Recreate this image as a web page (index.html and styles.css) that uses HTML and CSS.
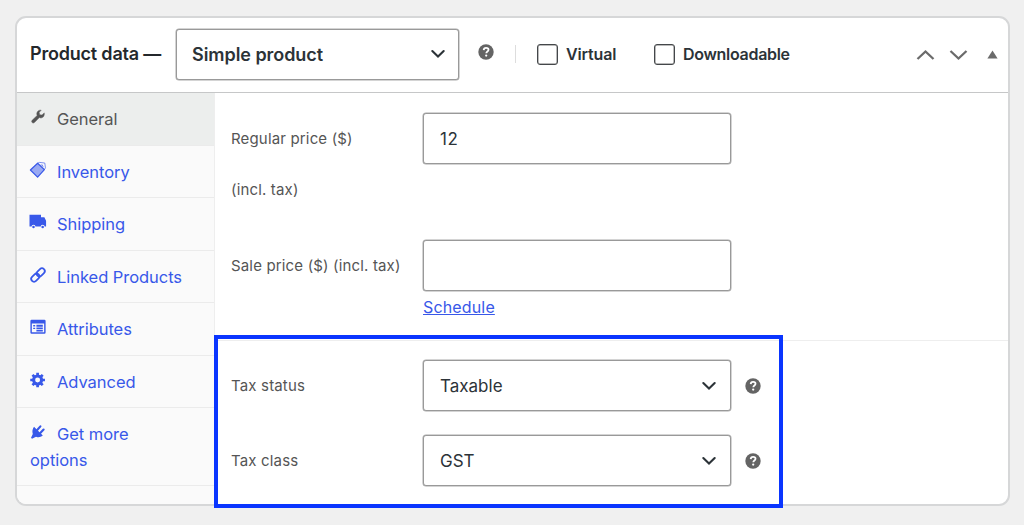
FILE: index.html
```html
<!DOCTYPE html>
<html lang="en">
<head>
<meta charset="utf-8">
<title>Product data</title>
<link rel="stylesheet" href="styles.css">
</head>
<body>
<svg class="defs" width="0" height="0">
  <symbol id="help" viewBox="0 0 16 16"><circle cx="8" cy="8" r="7.7" fill="#646464"/><path d="M5.7 6.1C5.8 4.5 6.8 3.9 8.1 3.9c1.5 0 2.4.8 2.4 1.9 0 1.8-2.2 1.6-2.2 3.4" fill="none" stroke="#fff" stroke-width="1.8"/><circle cx="8.2" cy="11.6" r="1.15" fill="#fff"/></symbol>
  <symbol id="down" viewBox="0 0 16 10"><path d="M2.300 2l5.700 5.600L13.700 2" fill="none" stroke="currentColor" stroke-width="2.1" stroke-linecap="round"/></symbol>
</svg>
<main class="panel">
  <header class="head">
    <h2 class="title">Product data —</h2>
    <div class="field select type">Simple product<svg class="chev"><use href="#down"/></svg></div>
    <svg class="help head-help"><use href="#help"/></svg>
    <span class="sep"></span>
    <label class="check virtual"><span class="box"></span>Virtual</label>
    <label class="check"><span class="box"></span><span class="dl">Downloadable</span></label>
    <div class="handles">
      <svg width="19" height="12" viewBox="0 0 19 12"><path d="M1.5 10l8-7.5 8 7.5" fill="none" stroke="#6b6b6b" stroke-width="2.3"/></svg>
      <svg width="19" height="12" viewBox="0 0 19 12"><path d="M1.5 2l8 7.5 8-7.5" fill="none" stroke="#6b6b6b" stroke-width="2.3"/></svg>
      <svg width="11" height="12" viewBox="0 0 11 12"><path d="M.4 9.5L5.5 1.5l5.1 8z" fill="#6b6b6b"/></svg>
    </div>
  </header>
  <div class="body">
    <nav class="tabs">
      <a class="tab active"><svg class="icon" viewBox="0 0 20 20"><path d="M16.700 9.800c-1.300 1.400-3.400 1.700-5 .9l-6.200 6.200c-.8.8-2 .8-2.800 0s-.8-2 0-2.800L9 8c-.9-1.700-.6-3.800.8-5.200C10.900 1.700 12.500 1.200 14 1.600L11.500 4.100l.5 3 3 .5 2.800-2.700c.3 1.700-.1 3.600-1.100 4.900z" stroke="currentColor" stroke-width=".6"/></svg>General</a>
      <a class="tab"><svg class="icon" viewBox="0 0 20 20"><path d="M.5 10L9.500 1.500l8.500 8-8.500 9.500z" fill-opacity=".5" stroke="currentColor" stroke-width="1.500" stroke-linejoin="round"/><path d="M9.500 1.500L12 .5l6.500.8.8 6-1.300 2.200M13 4q3-2 3.500 2.500" fill="none" stroke="currentColor" stroke-width="1.100" stroke-opacity=".75"/></svg>Inventory</a>
      <a class="tab"><svg class="icon truck" viewBox="0 0 20 20"><path d="M0 2h13.500v3h4l2 4v7h-1.700a2.300 2.300 0 0 0-4.600 0H7a2.300 2.300 0 0 0-4.600 0H0z"/><circle cx="4.700" cy="16.500" r="1.500"/><circle cx="15.500" cy="16.500" r="1.500"/></svg>Shipping</a>
      <a class="tab"><svg class="icon" viewBox="0 0 20 20"><g fill="none" stroke="currentColor" stroke-width="2.200" transform="rotate(-45 10 10)"><rect x="-.5" y="6.500" width="11.500" height="7" rx="3.500"/><rect x="9" y="6.500" width="11.500" height="7" rx="3.500"/></g></svg>Linked Products</a>
      <a class="tab"><svg class="icon" viewBox="0 0 20 20"><path fill-rule="evenodd" d="M2 1h16q1.500 0 1.500 1.500v14.500q0 1.500-1.500 1.500H2q-1.500 0-1.500-1.500V2.500Q.5 1 2 1zM2.300 5.500v11h15.400v-11z"/><path d="M4 7.500h2.500v2H4zM8 7.200h8v2.500H8zM4 10.800h2.500v1.800H4zM8 10.500h8v2.300H8zM8 13.600h8v2H8z"/></svg>Attributes</a>
      <a class="tab"><svg class="icon" viewBox="0 0 20 20"><circle cx="9.500" cy="10" r="5" fill="none" stroke="currentColor" stroke-width="3.800"/><path d="M9.500 .8v4M9.500 15.200v4M.3 10h4M14.700 10h4M3.100 3.600l3 3M12.900 13.400l3 3M3.100 16.400l3-3M12.900 6.600l3-3" stroke="currentColor" stroke-width="3.400"/></svg>Advanced</a>
      <a class="tab last"><svg class="icon" viewBox="0 0 20 20"><path d="M5 3.500L16 14.500c-2.800 2-5.500 2.500-8.500 1.300L2.500 18.500 1.300 17.300 3.500 12.500C2.500 9.500 3 6.200 5 3.500z"/><path d="M9 7.500l4-4.500M12.800 11.300L17 7" stroke="currentColor" stroke-width="2.700" stroke-linecap="round"/></svg>Get more<br><span class="opt">options</span></a>
    </nav>
    <section class="content">
      <div class="group prices">
        <div class="row"><span class="label two"><span>Regular price ($)</span><span class="incl">(incl. tax)</span></span><div class="field num">12</div></div>
        <div class="row"><span class="label sale">Sale price ($) (incl. tax)</span><div><div class="field"></div><a class="schedule">Schedule</a></div></div>
      </div>
      <div class="group taxes">
        <div class="row"><span class="label status">Tax status</span><div class="field select"><span class="taxable">Taxable</span><svg class="chev"><use href="#down"/></svg></div><svg class="help"><use href="#help"/></svg></div>
        <div class="row"><span class="label class">Tax class</span><div class="field select"><span class="gst">GST</span><svg class="chev"><use href="#down"/></svg></div><svg class="help"><use href="#help"/></svg></div>
      </div>
    </section>
  </div>
</main>
<div class="highlight"></div>
</body>
</html>
```
FILE: styles.css
```css
* { box-sizing: border-box; }
body { margin: 0; height: 525px; padding: 16px 14px 19px 15px; overflow: hidden; background: #f0f0f0; color: #2c3338; font-family: Inter, "Liberation Sans", sans-serif; font-size: 17px; }
.defs { position: absolute; }
.panel { height: 490px; display: flex; flex-direction: column; background: #fff; border: 2px solid #d6d7d8; border-radius: 11px; overflow: hidden; }
.head { height: 75px; flex: none; display: flex; align-items: center; padding: 0 10px 2px 13px; border-bottom: 1px solid #c6c7c8; }
.title { width: 146px; margin: 0; padding-bottom: 2px; font-size: 18px; font-weight: 600; letter-spacing: -.2px; white-space: nowrap; color: #24282c; }
.field { width: 308px; height: 51px; flex: none; display: flex; align-items: center; padding: 0 13px 0 16px; border: 1px solid #999; border-radius: 3px; background: #fff; box-shadow: 0 0 0 .5px #aaa; }
.select { justify-content: space-between; }
.type { width: 283px; padding-left: 15px; font-size: 18px; font-weight: 600; letter-spacing: -.05px; }
.type .chev { margin-right: -1px; }
.chev { width: 16px; height: 10px; }
.help { width: 16px; height: 16px; flex: none; }
.head-help { margin: 0 21px 4px 19px; }
.sep { width: 1px; height: 18px; background: #ddd; }
.check { display: flex; align-items: center; gap: 8px; margin-left: 21px; font-size: 16px; font-weight: 600; letter-spacing: -.15px; }
.virtual { width: 96px; }
.dl { letter-spacing: -.3px; }
.box { width: 21px; height: 21px; border: 1.500px solid #44474a; border-radius: 3px; box-shadow: inset 0 0 0 .5px #777; }
.handles { display: flex; align-items: center; gap: 14px; margin-left: auto; padding-top: 2px; }
.handles svg:last-child { margin-left: 5px; }
.body { flex: 1; display: flex; min-height: 0; }
.tabs { width: 198px; flex: none; border-right: 1px solid #eee; background: #fafafa; }
.tab { display: block; height: 52.500px; padding: 13px 13px 0; border-bottom: 1px solid #ebebeb; font-size: 16.500px; letter-spacing: -.05px; line-height: 26px; color: #3858e9; white-space: nowrap; }
.active { background: #eceeed; color: #555; }
.last { height: 78px; }
.icon { width: 16px; height: 16px; margin-right: 11px; vertical-align: 0; fill: currentColor; overflow: visible; }
.truck { width: 18px; height: 17px; margin-left: -1px; margin-right: 10px; }
.content { flex: 1; }
.group { padding: 20px 0 0 16px; }
.prices { height: 248px; border-bottom: 1px solid #eee; }
.group.taxes { padding-top: 19px; }
.row { display: flex; align-items: flex-start; }
.prices .row + .row { margin-top: 76px; }
.taxes .row + .row { margin-top: 24px; }
.label { width: 192px; line-height: 51px; font-size: 15px; letter-spacing: .16px; color: #555; white-space: nowrap; }
.two { display: flex; flex-direction: column; height: 51px; }
.schedule { display: block; line-height: 32px; color: #3858e9; text-decoration: underline; font-size: 16px; letter-spacing: .15px; }
.num, .taxes .field { font-size: 17px; color: #2c3338; }
.num { letter-spacing: .5px; }
.taxes .help { margin: 18px 0 0 14px; }
.highlight { position: absolute; left: 214px; top: 335px; width: 569px; height: 173px; border: 4px solid #0a35ff; pointer-events: none; }
```
